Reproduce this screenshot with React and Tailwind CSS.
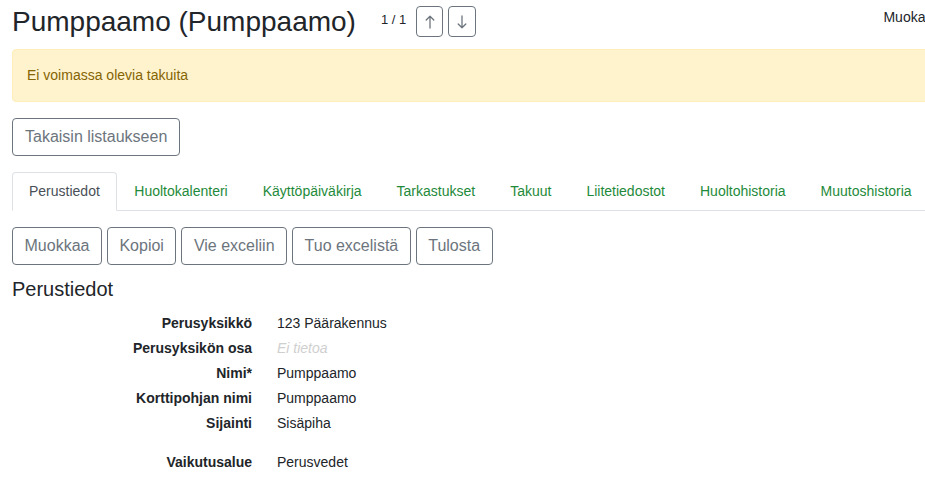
import React from "react";

const tabs = [
  "Perustiedot",
  "Huoltokalenteri",
  "Käyttöpäiväkirja",
  "Tarkastukset",
  "Takuut",
  "Liitetiedostot",
  "Huoltohistoria",
  "Muutoshistoria",
];

const actions = ["Muokkaa", "Kopioi", "Vie exceliin", "Tuo excelistä", "Tulosta"];

const rows = [
  ["Perusyksikkö", "123 Päärakennus"],
  ["Perusyksikön osa", null],
  ["Nimi*", "Pumppaamo"],
  ["Korttipohjan nimi", "Pumppaamo"],
  ["Sijainti", "Sisäpiha"],
];

function Arrow({ down }) {
  return (
    <svg
      width="10"
      height="14"
      viewBox="0 0 10 14"
      fill="none"
      stroke="currentColor"
      strokeWidth="1.3"
      strokeLinecap="round"
      strokeLinejoin="round"
      style={down ? { transform: "rotate(180deg)" } : undefined}
    >
      <path d="M5 13V1.2M1.2 5L5 1.2L8.8 5" />
    </svg>
  );
}

function Row({ label, value }) {
  return (
    <div className="flex h-[25px] items-center text-[14px] leading-[25px]">
      <div className="w-[240px] text-right font-bold text-[#212529]">{label}</div>
      <div className="pl-[25px]">
        {value === null ? (
          <span className="italic text-[#cfcfcf]">Ei tietoa</span>
        ) : (
          <span className="text-[#212529]">{value}</span>
        )}
      </div>
    </div>
  );
}

export default function App() {
  return (
    <div
      className="w-[925px] h-[481px] overflow-hidden bg-white text-[#212529]"
      style={{ fontFamily: '"Liberation Sans", Arial, sans-serif' }}
    >
      <div className="w-[1027px] pl-3">
        {/* Header */}
        <div className="flex items-start pt-[5px]">
          <div className="flex items-center">
            <h2 className="text-[28px] leading-[33.6px] font-normal text-[#212529]">
              Pumppaamo (Pumppaamo)
            </h2>
            <span className="ml-[25px] text-[13px] leading-[20px] text-[#212529] -mt-[3px]">1 / 1</span>
            <button className="ml-[10px] flex h-[31px] w-[27px] items-center justify-center rounded-[4px] border border-[#6c757d] text-[#6c757d]">
              <Arrow />
            </button>
            <button className="ml-[5px] flex h-[31px] w-[28px] items-center justify-center rounded-[4px] border border-[#6c757d] text-[#6c757d]">
              <Arrow down />
            </button>
          </div>
          <div className="ml-auto pt-[2px] text-[14px] leading-[20px] text-[#212529] whitespace-nowrap pr-3">
            Muokattu 12.03.2024
          </div>
        </div>

        {/* Alert */}
        <div className="mt-[10px] rounded-[4px] border border-[#ffeeba] bg-[#fff3cd] px-[14px] py-[15px] text-[14px] leading-[21px] text-[#856404]">
          Ei voimassa olevia takuita
        </div>

        {/* Back button */}
        <div className="mt-[16px]">
          <button className="h-[38px] rounded-[4px] border border-[#6c757d] px-[12px] text-[16px] leading-[24px] text-[#6c757d]">
            Takaisin listaukseen
          </button>
        </div>

        {/* Tabs */}
        <div className="mt-[16px] flex border-b border-[#dee2e6] w-[913px]">
          {tabs.map((t, i) => (
            <div
              key={t}
              className={
                i === 0
                  ? "-mb-px rounded-t-[4px] border border-[#dee2e6] border-b-white bg-white px-4 py-2 text-[14px] leading-[21px] text-[#495057] whitespace-nowrap"
                  : "-mb-px border border-transparent px-[16.5px] py-2 text-[14px] leading-[21px] text-[#1e8a3a] whitespace-nowrap"
              }
            >
              {t}
            </div>
          ))}
        </div>

        {/* Actions */}
        <div className="mt-[16px] flex gap-[5px]">
          {actions.map((a) => (
            <button
              key={a}
              className="h-[38px] rounded-[4px] border border-[#6c757d] px-[11.5px] text-[16px] leading-[24px] text-[#6c757d]"
            >
              {a}
            </button>
          ))}
        </div>

        {/* Section */}
        <h5 className="mt-[12px] text-[20px] leading-[24px] font-normal text-[#212529]">Perustiedot</h5>

        <div className="mt-[10px]">
          {rows.map(([l, v]) => (
            <Row key={l} label={l} value={v} />
          ))}
          <div className="mt-[14px]">
            <Row label="Vaikutusalue" value="Perusvedet" />
          </div>
        </div>
      </div>
    </div>
  );
}
